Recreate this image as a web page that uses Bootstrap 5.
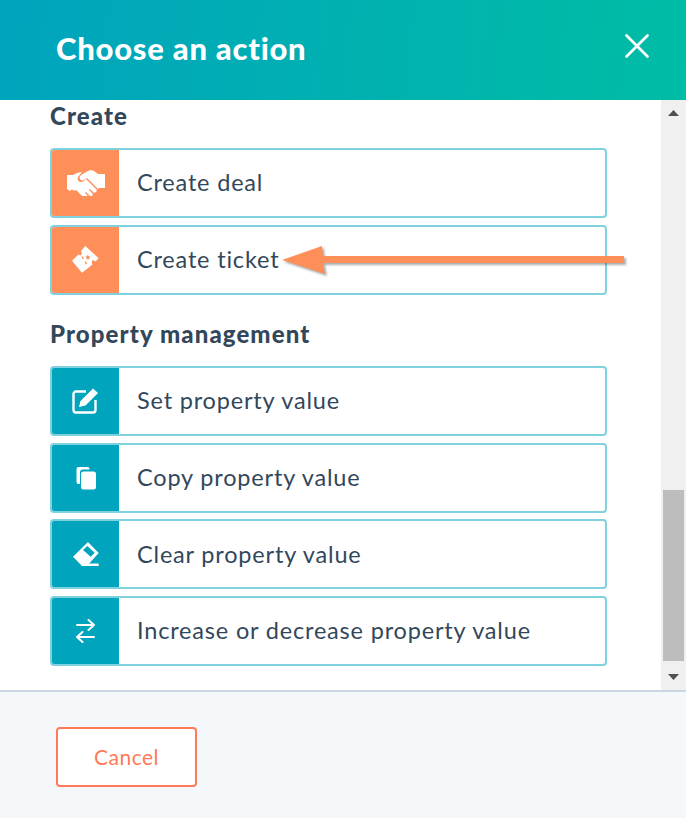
<!DOCTYPE html>
<html lang="en"><head><meta charset="utf-8"><title>Choose an action</title>
<link rel="stylesheet" href="https://cdn.jsdelivr.net/npm/bootstrap@5.3.0/dist/css/bootstrap.min.css">
<style>
html,body{height:100%;margin:0}
body{font-family:Lato,"Open Sans","Liberation Sans",sans-serif;color:#33475b;overflow:hidden;background:#fff}
.dlg{width:686px;height:818px;position:relative}
.dlg-head{height:100px;background:linear-gradient(95deg,#00a4bd 0%,#00bda5 100%);padding:0 36px 4px 56px}
.dlg-title{font-size:31px;font-weight:900;color:#fff;margin:0;line-height:1;letter-spacing:.75px}
.x-btn{background:none;border:0;padding:0;width:26px;height:26px;line-height:0;margin-top:-4px}
.dlg-body{height:590px;overflow:hidden}
.scroll-main{width:661px;padding:3px 54px 0 50px}
.grp-title{font-size:24px;font-weight:900;line-height:26px;margin:0 0 19px;letter-spacing:1.1px}
.act{height:70px;border:2px solid #7fd1de;border-radius:4px;margin-bottom:6.67px;background:#fff;overflow:hidden}
.act-ico{width:67px;flex:none;height:100%}
.ico-o{background:#ff8f59}
.ico-t{background:#00a4bd}
.act-txt{font-size:23.5px;padding-left:18px;letter-spacing:.82px;line-height:1}
.grp2{margin-top:26.3px}
.sb{width:25px;background:#f0f0f0;flex:none;padding-left:2px}
.sb-btn-a{height:26px;width:21px;line-height:0}
.sb-btn-b{height:32px;width:21px;line-height:0}
.sb-top{height:364px}
.sb-thumb{height:171px;width:21px;background:#bdbdbd}
.dlg-foot{height:128px;background:#f5f8fa;border-top:2px solid #cbd6e2;padding:35px 0 0 56px}
.cancel{width:141px;height:60px;background:#fff;border:2px solid #ff7a59;border-radius:4px;color:#ff7a59;font-size:21px;letter-spacing:.45px;padding:0}
.cancel:hover{background:#fff;color:#ff7a59;border-color:#ff7a59}
.pointer{position:absolute;left:278px;top:238px;width:356px;height:46px;filter:drop-shadow(2px 2px 1px rgba(40,50,60,.4))}
</style></head>
<body>
<div class="dlg d-flex flex-column">
  <div class="dlg-head d-flex align-items-center justify-content-between">
    <h1 class="dlg-title">Choose an action</h1>
    <button class="x-btn" type="button" aria-label="Close"><svg width="26" height="26" viewBox="0 0 26 26"><path d="M2.500 2.500 23.500 23.500M23.500 2.500 2.500 23.500" stroke="#fff" stroke-width="2.700" stroke-linecap="round"/></svg></button>
  </div>
  <div class="dlg-body d-flex">
    <div class="scroll-main">
      <h2 class="grp-title">Create</h2>
      <div class="act d-flex align-items-center">
        <div class="act-ico ico-o d-flex align-items-center justify-content-center">
          <svg width="38" height="26" viewBox="0 0 38 26" fill="#fff"><path d="M0 5h6l4-2 5-1-4 5c-1 2 0 5 3 5 2 0 3-1 5-3l10 10c1 1 1 2 0 3s-2 1-3 0l-3-3-1 1 3 3c1 1 1 2 0 3s-2 0-3-1l-3-3-1 1 2 2c1 1 0 2-1 2-2 1-3-1-5-2l-3-3c-1-2-3-2-4-1-1-2-3-1-4 0l-3-2H0z"/><path d="M14 5l5-3c3-2 6-2 8-1l4 3h7v14h-6l-1 1-11-11-3 2c-2 1-4 0-4-1-1-1 0-3 1-4z"/></svg>
        </div>
        <div class="act-txt">Create deal</div>
      </div>
      <div class="act d-flex align-items-center">
        <div class="act-ico ico-o d-flex align-items-center justify-content-center">
          <svg width="27" height="27" viewBox="0 0 27 27" fill="#fff"><path fill-rule="evenodd" d="M13.300 0 26.700 12.300 23.500 15.500 21 14 19.500 16 20.500 18.500 10 26.700 0 14.700 6.500 8.500 8.500 9.500 10 7.500 9 5z M15.700 9 14.900 10.300 13.500 10.700 14.700 12 14.500 13.600 16 13 17.500 13.600 17.200 12 18.200 10.700 16.700 10.300z"/><path d="M9.800 10.500 15 18.500" stroke="#ff8f59" stroke-width="1.300" stroke-dasharray="3 3"/></svg>
        </div>
        <div class="act-txt">Create ticket</div>
      </div>
      <div class="grp2">
        <h2 class="grp-title">Property management</h2>
        <div class="act d-flex align-items-center">
          <div class="act-ico ico-t d-flex align-items-center justify-content-center">
            <svg width="28" height="28" viewBox="1 0 28 28"><path d="M15 4.500H5a2.500 2.500 0 0 0-2.500 2.500v16A2.500 2.500 0 0 0 5 25.500h17a2.500 2.500 0 0 0 2.500-2.500V13" fill="none" stroke="#fff" stroke-width="2.400"/><path d="M8 20l1.500-6L22 1.500 27 6 14.500 18.500z" fill="#fff"/></svg>
          </div>
          <div class="act-txt">Set property value</div>
        </div>
        <div class="act d-flex align-items-center">
          <div class="act-ico ico-t d-flex align-items-center justify-content-center">
            <svg width="20" height="24" viewBox="0 0 20 24" fill="#fff"><path d="M2.500 1h9a2 2 0 0 1 2 2v.5H7A3 3 0 0 0 4 6.500V18H2.500a2 2 0 0 1-2-2V3a2 2 0 0 1 2-2z"/><rect x="5" y="5.500" width="15" height="18" rx="2.500"/></svg>
          </div>
          <div class="act-txt">Copy property value</div>
        </div>
        <div class="act d-flex align-items-center">
          <div class="act-ico ico-t d-flex align-items-center justify-content-center">
            <svg width="26" height="25" viewBox="0 0 26 25"><path fill="#fff" fill-rule="evenodd" d="M15 0 25.700 11 16 21.700 13.300 24 9 24 0 14.700z M14.300 4 10 8 17.700 14.700 21.700 10.700z"/><rect x="13" y="21.500" width="12.700" height="2.500" fill="#fff"/></svg>
          </div>
          <div class="act-txt">Clear property value</div>
        </div>
        <div class="act d-flex align-items-center">
          <div class="act-ico ico-t d-flex align-items-center justify-content-center">
            <svg width="19" height="24" viewBox="0 0 19 24" fill="none" stroke="#fff" stroke-width="2" stroke-linecap="round" stroke-linejoin="round"><path d="M1 6h17M12.500 1l5.500 5-5.500 5"/><path d="M18 18H1M6.500 13 1 18l5.500 5"/></svg>
          </div>
          <div class="act-txt">Increase or decrease property value</div>
        </div>
      </div>
    </div>
    <div class="sb">
      <div class="sb-btn-a d-flex align-items-center justify-content-center"><svg width="11" height="6" viewBox="0 0 11 6"><path d="M5.500 0 11 6H0z" fill="#505050"/></svg></div>
      <div class="sb-top"></div>
      <div class="sb-thumb"></div>
      <div class="sb-btn-b d-flex align-items-center justify-content-center"><svg width="11" height="6" viewBox="0 0 11 6"><path d="M5.500 6 0 0h11z" fill="#505050"/></svg></div>
    </div>
  </div>
  <div class="dlg-foot">
    <button type="button" class="btn cancel">Cancel</button>
  </div>
  <svg class="pointer" viewBox="0 0 356 46">
    <path d="M4 22 44 8 45 18H346V25H45L47 36z" fill="#ff8f59"/>
  </svg>
</div>
</body></html>
